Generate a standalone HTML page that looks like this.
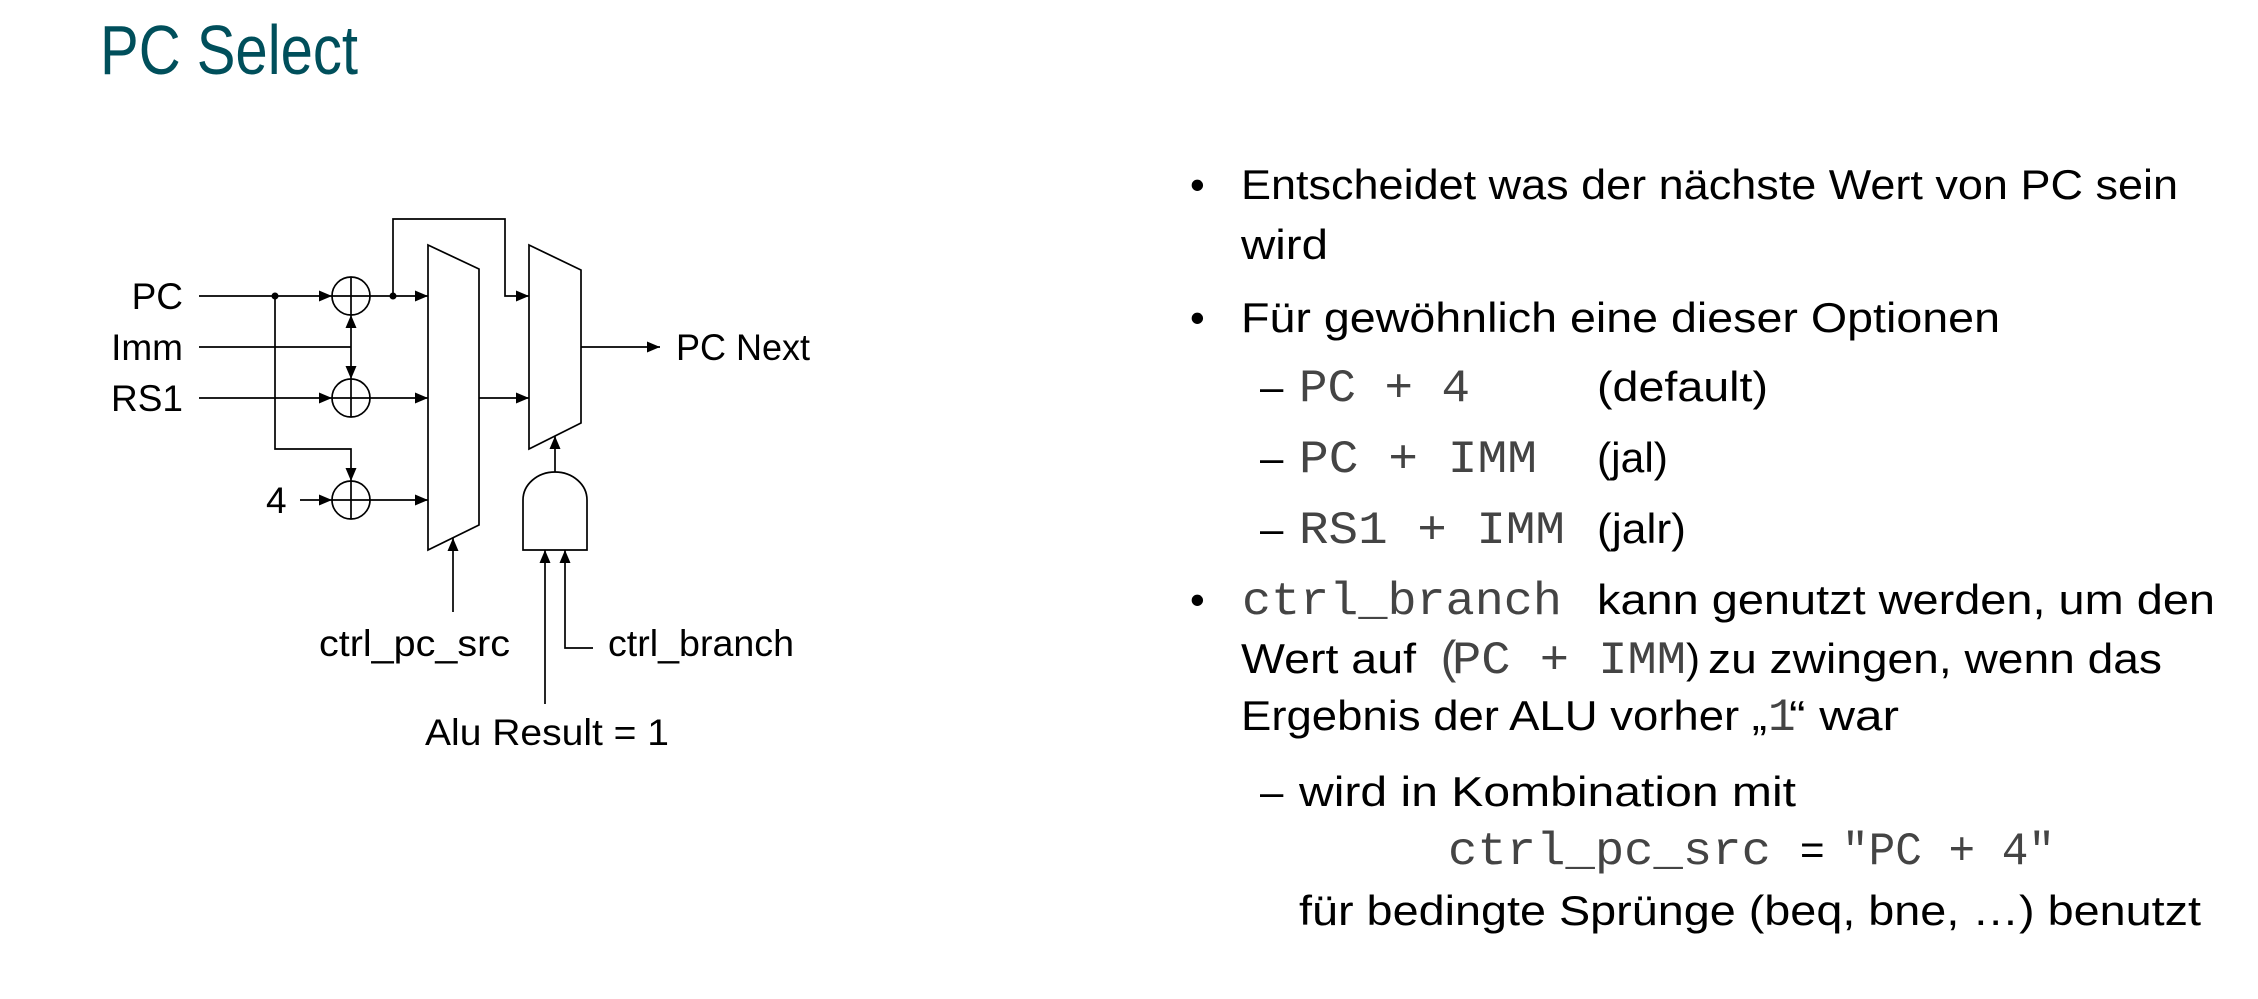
<!DOCTYPE html>
<html><head><meta charset="utf-8"><style>
html,body{margin:0;padding:0;background:#fff;width:2258px;height:999px;overflow:hidden}
svg{display:block}
.t{font-family:"Liberation Sans",sans-serif;font-size:42px;fill:#000}
.m{font-family:"Liberation Mono",monospace;font-size:46px;fill:#444;font-weight:normal}
.d{font-family:"Liberation Sans",sans-serif;font-size:37px;fill:#000}
</style></head><body>
<svg width="2258" height="999" viewBox="0 0 2258 999" xmlns="http://www.w3.org/2000/svg">
<defs>
<marker id="a" viewBox="0 0 13 11" refX="13" refY="5.5" markerWidth="13" markerHeight="11" markerUnits="userSpaceOnUse" orient="auto"><path d="M0,0 L13,5.5 L0,11 z" fill="#000"/></marker>
</defs>
<text x="100" y="74" font-family="Liberation Sans, sans-serif" font-size="70" fill="#004f5b" textLength="258" lengthAdjust="spacingAndGlyphs">PC Select</text>

<g stroke="#000" stroke-width="1.7" fill="none">
<line x1="199" y1="296" x2="332" y2="296" marker-end="url(#a)"/>
<circle cx="351" cy="296" r="19"/><line x1="332" y1="296" x2="370" y2="296"/><line x1="351" y1="277" x2="351" y2="315"/>
<line x1="370" y1="296" x2="428" y2="296" marker-end="url(#a)"/>
<polyline points="393,296 393,219 505,219 505,296 529,296" marker-end="url(#a)"/>
<line x1="199" y1="347" x2="351" y2="347"/>
<line x1="351" y1="347" x2="351" y2="315" marker-end="url(#a)"/>
<line x1="351" y1="347" x2="351" y2="379" marker-end="url(#a)"/>
<line x1="199" y1="398" x2="332" y2="398" marker-end="url(#a)"/>
<circle cx="351" cy="398" r="19"/><line x1="332" y1="398" x2="370" y2="398"/><line x1="351" y1="379" x2="351" y2="417"/>
<line x1="370" y1="398" x2="428" y2="398" marker-end="url(#a)"/>
<polyline points="275,296 275,449 351,449 351,481" marker-end="url(#a)"/>
<line x1="300" y1="500" x2="332" y2="500" marker-end="url(#a)"/>
<circle cx="351" cy="500" r="19"/><line x1="332" y1="500" x2="370" y2="500"/><line x1="351" y1="481" x2="351" y2="519"/>
<line x1="370" y1="500" x2="428" y2="500" marker-end="url(#a)"/>
<polygon points="428,245 479,269 479,525 428,550"/>
<line x1="479" y1="398" x2="529" y2="398" marker-end="url(#a)"/>
<polygon points="529,245 581,270 581,423 529,449"/>
<line x1="581" y1="347" x2="660" y2="347" marker-end="url(#a)"/>
<path d="M523,550 L523,500 A32,28 0 0 1 587,500 L587,550 Z"/>
<line x1="555" y1="472" x2="555" y2="436" marker-end="url(#a)"/>
<line x1="545" y1="704" x2="545" y2="550" marker-end="url(#a)"/>
<polyline points="593,648 565,648 565,550" marker-end="url(#a)"/>
<line x1="453" y1="612" x2="453" y2="538" marker-end="url(#a)"/>
</g>
<circle cx="275" cy="296" r="3.5" fill="#000"/>
<circle cx="393" cy="296" r="3.5" fill="#000"/>

<text class="d" x="183" y="309" text-anchor="end">PC</text>
<text class="d" x="183" y="360" text-anchor="end">Imm</text>
<text class="d" x="183" y="411" text-anchor="end">RS1</text>
<text class="d" x="266" y="513">4</text>
<text class="d" x="676" y="360" textLength="134" lengthAdjust="spacingAndGlyphs">PC Next</text>
<text class="d" x="319" y="656" textLength="191" lengthAdjust="spacingAndGlyphs">ctrl_pc_src</text>
<text class="d" x="608" y="656" textLength="186" lengthAdjust="spacingAndGlyphs">ctrl_branch</text>
<text class="d" x="425" y="745" textLength="244" lengthAdjust="spacingAndGlyphs">Alu Result = 1</text>

<text class="t" x="1190" y="199">•</text>
<text class="t" x="1241" y="199" textLength="937" lengthAdjust="spacingAndGlyphs">Entscheidet was der nächste Wert von PC sein</text>
<text class="t" x="1241" y="259" textLength="87" lengthAdjust="spacingAndGlyphs">wird</text>
<text class="t" x="1190" y="332">•</text>
<text class="t" x="1241" y="332" textLength="759" lengthAdjust="spacingAndGlyphs">Für gewöhnlich eine dieser Optionen</text>

<text class="t" x="1260" y="401">–</text>
<text class="m" x="1299" y="401" textLength="171" lengthAdjust="spacingAndGlyphs">PC + 4</text>
<text class="t" x="1597" y="401" textLength="171" lengthAdjust="spacingAndGlyphs">(default)</text>
<text class="t" x="1260" y="472">–</text>
<text class="m" x="1299" y="472" textLength="238" lengthAdjust="spacingAndGlyphs">PC + IMM</text>
<text class="t" x="1597" y="472" textLength="71" lengthAdjust="spacingAndGlyphs">(jal)</text>
<text class="t" x="1260" y="543">–</text>
<text class="m" x="1299" y="543" textLength="266" lengthAdjust="spacingAndGlyphs">RS1 + IMM</text>
<text class="t" x="1597" y="543" textLength="89" lengthAdjust="spacingAndGlyphs">(jalr)</text>

<text class="t" x="1190" y="614">•</text>
<text class="m" x="1242" y="614" textLength="320" lengthAdjust="spacingAndGlyphs">ctrl_branch</text>
<text class="t" x="1597" y="614" textLength="618" lengthAdjust="spacingAndGlyphs">kann genutzt werden, um den</text>
<text class="t" x="1241" y="673" textLength="175" lengthAdjust="spacingAndGlyphs">Wert auf</text>
<text class="m" x="1436" y="673">(</text>
<text class="m" x="1452" y="673" textLength="234" lengthAdjust="spacingAndGlyphs">PC + IMM</text>
<text class="t" x="1686" y="673">)</text>
<text class="t" x="1708" y="673" textLength="454" lengthAdjust="spacingAndGlyphs">zu zwingen, wenn das</text>
<text class="t" x="1241" y="730" textLength="526" lengthAdjust="spacingAndGlyphs">Ergebnis der ALU vorher „</text>
<text class="m" x="1768" y="730">1</text>
<text class="t" x="1789" y="730" textLength="110" lengthAdjust="spacingAndGlyphs">“ war</text>

<text class="t" x="1260" y="806">–</text>
<text class="t" x="1299" y="806" textLength="497" lengthAdjust="spacingAndGlyphs">wird in Kombination mit</text>
<text class="m" x="1448" y="864" textLength="323" lengthAdjust="spacingAndGlyphs">ctrl_pc_src</text>
<text class="t" x="1800" y="864">=</text>
<text class="m" x="1842" y="864" textLength="213" lengthAdjust="spacingAndGlyphs">"PC + 4"</text>
<text class="t" x="1299" y="925" textLength="902" lengthAdjust="spacingAndGlyphs">für bedingte Sprünge (beq, bne, …) benutzt</text>
</svg>
</body></html>
